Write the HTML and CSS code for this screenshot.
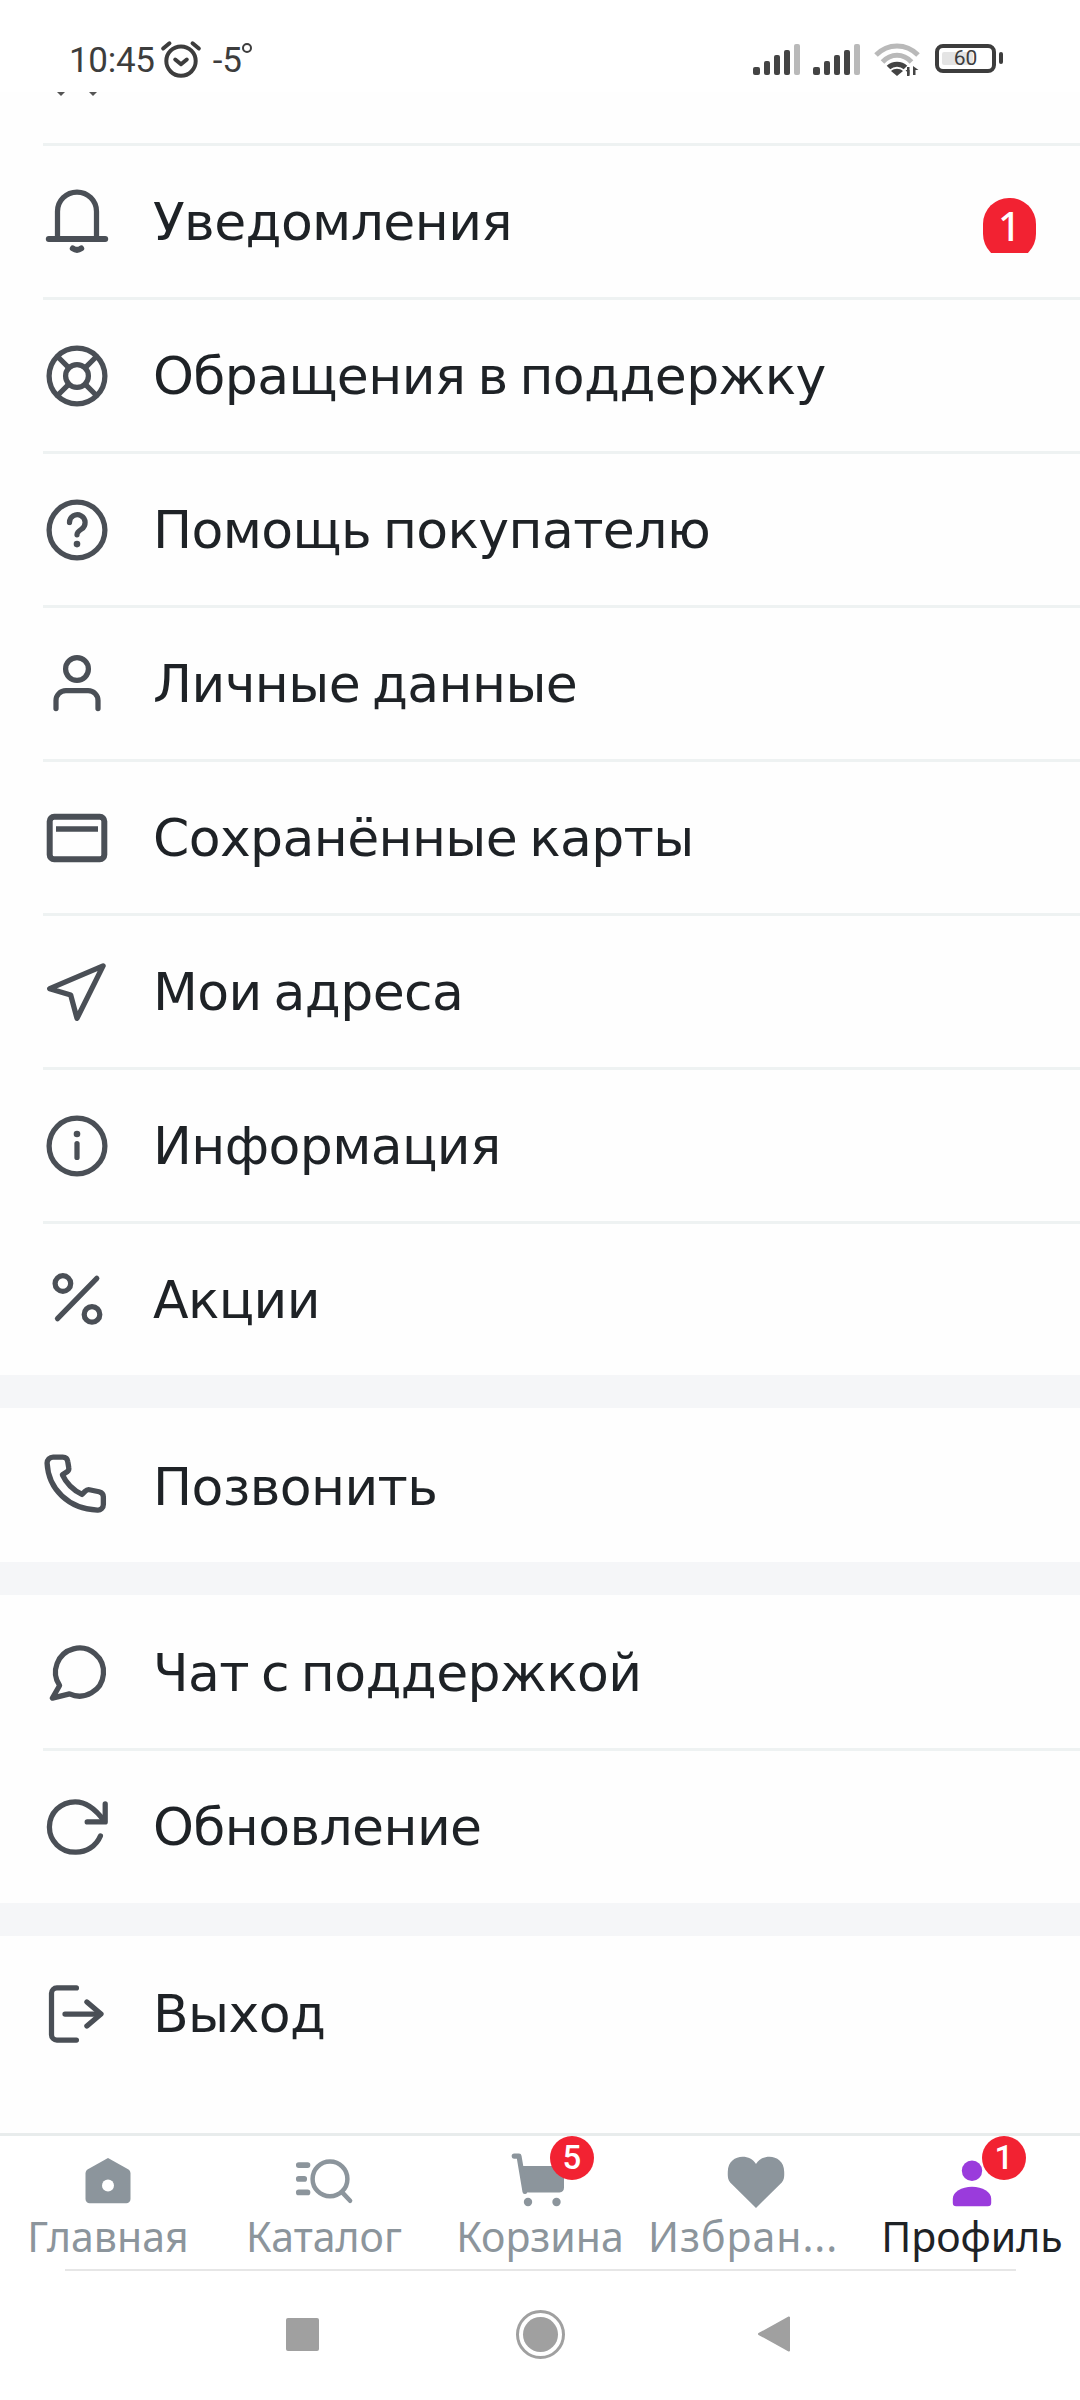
FILE: index.html
```html
<!DOCTYPE html>
<html lang="ru">
<head>
<meta charset="utf-8">
<title>Профиль</title>
<link rel="stylesheet" href="styles.css">
</head>
<body>
<div class="screen">
  <header class="status">
    <div class="status-left">
      <span class="time">10:45</span>
      <svg class="alarm" viewBox="0 0 40 36"><circle cx="20" cy="20" r="14"/><path d="M14.500 18.500l5.500 4.500 5.500-4.500"/><path d="M3 8l6-5M37 8l-6-5"/></svg>
      <span class="temp">-5</span><span class="deg"></span>
    </div>
    <div class="status-right">
      <svg class="signal" viewBox="0 0 48 31"><rect x="0" y="23" width="7" height="8" rx="2" class="on"/><rect x="11" y="17" width="6" height="14" rx="2" class="on"/><rect x="21" y="11" width="6" height="20" rx="2" class="on"/><rect x="31" y="6" width="6" height="25" rx="2" class="on"/><rect x="41" y="0" width="6" height="31" rx="2" class="off"/></svg>
      <svg class="signal" viewBox="0 0 48 31"><rect x="0" y="23" width="7" height="8" rx="2" class="on"/><rect x="11" y="17" width="6" height="14" rx="2" class="on"/><rect x="21" y="11" width="6" height="20" rx="2" class="on"/><rect x="31" y="6" width="6" height="25" rx="2" class="on"/><rect x="41" y="0" width="6" height="31" rx="2" class="off"/></svg>
      <svg class="wifi" viewBox="0 0 46 34"><path class="wifi-off" d="M2 13C14 1 32 1 44 13"/><path class="wifi-off" d="M8.500 20C17 11 29 11 37.500 20"/><path class="wifi-on" d="M14.500 25.500C19 21 27 21 31.500 25.500"/><path class="wifi-fill" d="M23 34l-6-5c3.500-3 8.500-3 12 0z"/><path class="wifi-fill" d="M33 25v9h2.500v-9zM39 24v9h2.500v-5h3z"/><path class="wifi-fill" d="M35.500 28l-4 0 4 5z"/></svg>
      <div class="battery"><span class="battery-fill"></span><span class="battery-text">60</span></div><span class="battery-nub"></span>
    </div>
  </header>

  <main class="menu">
    <div class="stub"><svg class="stub-marks" viewBox="0 0 40 4"><path d="M0 0h8l-4 4zM32 0h8l-4 4z"/></svg></div>

    <div class="row">
      <svg class="ico" viewBox="0 0 24 24"><path class="heavy" d="M2.600 17.700H21.400"/><path d="M5.500 17.700V8.500a6.500 6.500 0 0 1 13 0v9.200"/><path class="heavy" d="M10.600 20.800q1.400 1 2.800 0"/></svg>
      <span class="label">Уведомления</span>
      <span class="clip"><span class="count">1</span></span>
    </div>
    <div class="row">
      <svg class="ico" viewBox="0 0 24 24"><circle cx="12" cy="12" r="9.300"/><circle cx="12" cy="12" r="3.800"/><path d="M5.500 5.500l3.800 3.800M18.500 5.500l-3.800 3.800M5.500 18.500l3.800-3.800M18.500 18.500l-3.800-3.800"/></svg>
      <span class="label">Обращения в поддержку</span>
    </div>
    <div class="row">
      <svg class="ico" viewBox="0 0 24 24"><circle cx="12" cy="12" r="9.300"/><path d="M9.500 9.500a2.600 2.600 0 1 1 4 2.200c-.9.600-1.500 1-1.500 1.900"/><circle class="solid" cx="12" cy="16.700" r="1.100"/></svg>
      <span class="label">Помощь покупателю</span>
    </div>
    <div class="row">
      <svg class="ico" viewBox="0 0 24 24"><circle cx="12" cy="7" r="3.800"/><path d="M5 20.200v-2.700a3.300 3.300 0 0 1 3.300-3.300h7.400a3.300 3.300 0 0 1 3.300 3.300v2.700"/></svg>
      <span class="label">Личные данные</span>
    </div>
    <div class="row">
      <svg class="ico" viewBox="0 0 24 24"><rect class="card" x="2.900" y="4.900" width="18.200" height="14.200" rx="1.500"/><path class="butt" d="M5 9h14"/></svg>
      <span class="label">Сохранённые карты</span>
    </div>
    <div class="row">
      <svg class="ico" viewBox="0 0 24 24"><path d="M20.700 3.300L2.900 10.900l7 2.100 2.100 7.800z"/></svg>
      <span class="label">Мои адреса</span>
    </div>
    <div class="row">
      <svg class="ico" viewBox="0 0 24 24"><circle cx="12" cy="12" r="9.300"/><circle class="solid" cx="12" cy="8" r="1.100"/><path d="M12 11.200v4.600"/></svg>
      <span class="label">Информация</span>
    </div>
    <div class="row row-last">
      <svg class="ico" viewBox="0 0 24 24"><circle cx="7.300" cy="6.500" r="2.600"/><circle cx="17" cy="16.800" r="2.600"/><path d="M18.600 4.800L5.500 18.200"/></svg>
      <span class="label">Акции</span>
    </div>

    <div class="gap"></div>

    <div class="row row-single">
      <svg class="ico" viewBox="0 0 24 24"><path class="phone" transform="translate(-1.300 -.4) scale(1.110)" d="M4.800 2.800h2.900c.8 0 1.400.5 1.500 1.300l.3 1.800c.1.500-.1 1-.5 1.300L7.600 8.100c1.200 2.600 3.300 4.600 5.900 5.900l.9-.9c.4-.4.800-.6 1.300-.5l2.900.6c.8.200 1.300.8 1.300 1.500v2.300c0 1-.8 1.800-1.800 1.700C9.500 18.300 3.400 12.500 3 4.600 3 3.600 3.800 2.800 4.800 2.800z"/></svg>
      <span class="label">Позвонить</span>
    </div>

    <div class="gap"></div>

    <div class="row row-chat">
      <svg class="ico" viewBox="0 0 24 24"><path d="M6.200 16.500L3.800 20.700l5.700-1.400A8 8 0 1 0 6.200 16.500z"/></svg>
      <span class="label">Чат с поддержкой</span>
    </div>
    <div class="row row-last row-refresh">
      <svg class="ico" viewBox="0 0 24 24"><path d="M19.800 15a8.800 8.800 0 0 1-8.400 5.400C6.500 20.400 2.800 16.600 2.800 12s3.700-8.400 8.600-8.400c3.600 0 6.700 2.300 9.600 6.300"/><path d="M21.400 4.300v6h-6"/></svg>
      <span class="label">Обновление</span>
    </div>

    <div class="gap"></div>

    <div class="row row-exit">
      <svg class="ico" viewBox="0 0 24 24"><path d="M11.800 3.300H5.300a1.800 1.800 0 0 0-1.800 1.800v13.800a1.800 1.800 0 0 0 1.800 1.800h6.500"/><path d="M8 12h11.500"/><path d="M15.300 8l4.700 4-4.700 4"/></svg>
      <span class="label">Выход</span>
    </div>
  </main>

  <nav class="tabs">
    <div class="tab">
      <span class="tab-icon"><svg class="glyph" viewBox="0 0 24 24"><path d="M12 4.300l6.700 3.800c.5.300.8.800.8 1.400v8.500c0 .8-.6 1.400-1.400 1.400H5.900c-.8 0-1.400-.6-1.400-1.400V9.500c0-.6.300-1.100.8-1.400z"/><circle class="hole" cx="12" cy="13.500" r="2"/></svg></span>
      <span class="tab-label">Главная</span>
    </div>
    <div class="tab">
      <span class="tab-icon"><svg class="glyph-line" viewBox="0 0 24 24"><circle cx="14" cy="11.300" r="5.800"/><path d="M18 15.700l2.700 2.900"/><path class="thick" d="M3.600 6.700h2.900M3.600 11.300h1.800M3.600 15.800h2.900"/></svg></span>
      <span class="tab-label">Каталог</span>
    </div>
    <div class="tab">
      <span class="tab-icon"><svg class="glyph" viewBox="0 0 24 24"><path d="M6.200 7H18.500c1 0 1.500.6 1.500 1.500v5.700c0 1-.5 1.600-1.500 1.600H8.200c-.8 0-1.300-.5-1.400-1.200z"/><path class="cart-handle" d="M3.400 3.700H5L7 15.500"/><circle cx="8" cy="19" r="1.400"/><circle cx="17.500" cy="19" r="1.400"/></svg><span class="dot dot-cart">5</span></span>
      <span class="tab-label">Корзина</span>
    </div>
    <div class="tab tab-cut">
      <span class="tab-icon"><svg class="glyph" viewBox="0 0 24 24"><path d="M12 21L3.400 12.500C2.400 11.500 2.600 9.700 2.600 8.900 2.600 5.500 5.100 3.900 7.500 3.900c1.900 0 3.500.8 4.500 2.400 1-1.600 2.600-2.400 4.500-2.400 2.400 0 4.900 1.600 4.900 5 0 .8.200 2.600-.8 3.600z"/></svg></span>
      <span class="tab-label">Избран...</span>
    </div>
    <div class="tab tab-active">
      <span class="tab-icon"><svg class="glyph-active" viewBox="0 0 24 24"><circle cx="12" cy="8.600" r="3.400"/><path d="M6.700 20.400c-.7 0-1.100-.4-1.100-1.100v-1.400c0-2.200 2.900-4 6.400-4s6.400 1.800 6.400 4v1.400c0 .7-.4 1.100-1.100 1.100z"/></svg><span class="dot dot-profile">1</span></span>
      <span class="tab-label">Профиль</span>
    </div>
  </nav>

  <footer class="system">
    <div class="system-line"></div>
    <div class="system-keys">
      <span class="key-square"></span>
      <span class="key-circle"><span class="key-core"></span></span>
      <svg class="key-back" viewBox="0 0 34 38"><path d="M32 2.500v33L2 19z"/></svg>
    </div>
  </footer>
</div>
</body>
</html>
```
FILE: styles.css
```css
* { box-sizing: border-box; }
html, body { margin: 0; padding: 0; background: #fff; }
body { font-family: "Noto Sans", sans-serif; }
.screen { width: 1080px; height: 2400px; display: flex; flex-direction: column; overflow: hidden; background: #fefefe; }

/* status bar */
.status { height: 92px; flex: none; display: flex; justify-content: space-between; align-items: flex-start; padding: 41px 77px 0 69px; background: #fff; color: #3d3d3d; }
.status-left { display: flex; align-items: center; font-family: Roboto, sans-serif; font-size: 35px; line-height: 38px; margin-top: 1px; }
.time { letter-spacing: -.3px; }
.alarm { width: 42px; height: 38px; margin: -5px 0 0 5px; fill: none; stroke: #3d3d3d; stroke-width: 3.800; stroke-linecap: round; stroke-linejoin: round; }
.temp { margin-left: 11px; }
.deg { width: 10px; height: 10px; border: 2px solid #3d3d3d; border-radius: 50%; margin: -26px 0 0 0; }
.status-right { display: flex; align-items: flex-start; padding-top: 3px; }
.signal { width: 48px; height: 31px; margin-right: 12px; }
.signal .on { fill: #444; }
.signal .off { fill: #b9b9b9; }
.wifi { width: 46px; height: 34px; margin: -2px 15px 0 1px; fill: none; }
.wifi-off { stroke: #b9b9b9; stroke-width: 5; }
.wifi-on { stroke: #444; stroke-width: 5; }
.wifi-fill { fill: #444; }
.battery { position: relative; width: 61px; height: 29px; border: 4px solid #3d3d3d; border-radius: 8px; display: flex; align-items: center; justify-content: center; padding: 3px; }
.battery-fill { position: absolute; left: 3px; top: 4px; bottom: 4px; width: 31px; background: #e4e4e4; border-radius: 2px; }
.battery-text { position: relative; font-family: Roboto, sans-serif; font-size: 21px; line-height: 21px; color: #3d3d3d; }
.battery-nub { width: 4px; height: 12px; margin: 8px 0 0 3px; background: #3d3d3d; border-radius: 2px; }

/* menu */
.menu { flex: none; display: flex; flex-direction: column; }
.stub { height: 54px; margin-left: 43px; border-bottom: 3px solid #eef2f2; padding-left: 14px; }
.stub-marks { display: block; width: 40px; height: 4px; fill: #555; }
.row { height: 154px; margin-left: 43px; display: flex; align-items: center; border-bottom: 3px solid #eef2f2; position: relative; }
.row-last { height: 151px; border-bottom: 0; }
.row-single { border-bottom: 0; }
.row-chat { height: 156px; }
.row-refresh { height: 152px; }
.row-exit { height: 197px; border-bottom: 0; padding-bottom: 41px; }
.ico { width: 72px; height: 72px; margin-left: -2px; flex: none; fill: none; stroke: #4a4f56; stroke-width: 1.750; stroke-linecap: round; stroke-linejoin: round; }
.ico .solid { fill: #4a4f56; stroke: none; }
.ico .butt { stroke-linecap: butt; stroke-width: 1.900; }
.ico .card { stroke-width: 2; }
.ico .heavy { stroke-width: 2; }
.ico .phone { stroke-width: 1.600; }
.label { margin-left: 40px; font-family: "DejaVu Sans", sans-serif; font-size: 52px; letter-spacing: -.6px; word-spacing: -4px; line-height: 64px; color: #1e2226; white-space: nowrap; }
.row-single .label, .row-chat .label { padding-top: 3px; }
.clip { position: absolute; right: 44px; top: 52px; width: 53px; height: 55px; overflow: hidden; }
.count { display: block; width: 53px; height: 62px; border-radius: 26px; background: #f22232; color: #fff; font-size: 40px; line-height: 56px; text-align: center; font-family: "Noto Sans", sans-serif; font-weight: 500; }
.gap { height: 33px; flex: none; background: #f5f6f8; }

/* bottom nav */
.tabs { height: 136px; flex: none; display: grid; grid-template-columns: repeat(5, 216px); border-top: 3px solid #e8ecec; background: #fff; }
.tab { display: flex; flex-direction: column; align-items: center; padding-top: 9px; color: #8c959c; }
.tab-active { color: #1e2226; }
.tab-icon { position: relative; width: 72px; height: 72px; display: block; }
.tab-icon svg { display: block; width: 72px; height: 72px; }
.glyph { fill: #8c959c; }
.glyph .hole { fill: #fff; }
.glyph .cart-handle { fill: none; stroke: #8c959c; stroke-width: 1.700; stroke-linecap: round; stroke-linejoin: round; }
.glyph-line { fill: none; stroke: #8c959c; stroke-width: 1.500; stroke-linecap: round; }
.glyph-line .thick { stroke-width: 1.900; }
.glyph-active { fill: #9a3bdc; }
.tab-label { font-size: 41px; line-height: 50px; white-space: nowrap; margin-top: -6px; }
.tab-cut { overflow: hidden; }
.tab-cut .tab-label { align-self: flex-start; letter-spacing: 1px; }
.dot { position: absolute; width: 44px; height: 44px; border-radius: 50%; background: #f22232; color: #fff; font-family: Roboto, sans-serif; font-weight: 500; font-size: 33px; line-height: 44px; text-align: center; }
.dot-cart { left: 46px; top: -9px; }
.dot-profile { left: 46px; top: -9px; }

/* system navigation */
.system { flex: 1; display: flex; flex-direction: column; align-items: center; background: #fff; }
.system-line { width: 951px; height: 2px; background: #e6e6e6; }
.system-keys { width: 1080px; display: grid; grid-template-columns: 286px 33px 197px 49px 192px 34px; align-items: center; height: 126px; }
.key-square { grid-column: 2; width: 33px; height: 33px; background: #a0a0a0; border-radius: 2px; }
.key-circle { grid-column: 4; width: 49px; height: 49px; border: 3px solid #a0a0a0; border-radius: 50%; display: flex; align-items: center; justify-content: center; }
.key-core { width: 35px; height: 35px; background: #a0a0a0; border-radius: 50%; }
.key-back { grid-column: 6; width: 34px; height: 38px; fill: #a0a0a0; stroke: #a0a0a0; stroke-width: 2; stroke-linejoin: round; }
```
